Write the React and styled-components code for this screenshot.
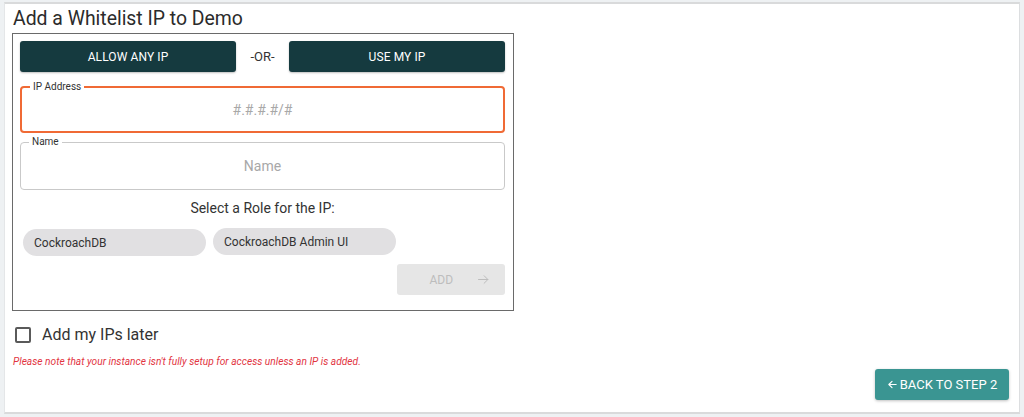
import React, { useState } from "react";
import styled, { createGlobalStyle } from "styled-components";

const GlobalStyle = createGlobalStyle`
  html, body {
    margin: 0;
    padding: 0;
    background: #eef1f3;
    font-family: Roboto, "Liberation Sans", Arial, sans-serif;
    color: #333;
  }
  * { box-sizing: border-box; }
`;

const ArrowRight = ({ size = 14, color = "currentColor" }) => (
  <svg width={size} height={size} viewBox="0 0 24 24" fill="none">
    <path d="M4 12h15M13 6l6 6-6 6" stroke={color} strokeWidth="1.6" strokeLinecap="round" strokeLinejoin="round" />
  </svg>
);

const ArrowLeft = ({ size = 12, color = "currentColor" }) => (
  <svg width={size} height={size} viewBox="0 0 24 24" fill="none">
    <path d="M20 12H5M11 5l-7 7 7 7" stroke={color} strokeWidth="2.4" strokeLinecap="round" strokeLinejoin="round" />
  </svg>
);

const App = () => {
  const [ip, setIp] = useState("");
  const [name, setName] = useState("");
  const [later, setLater] = useState(false);
  const roles = ["CockroachDB", "CockroachDB Admin UI"];

  return (
    <>
      <GlobalStyle />
      <Page>
        <Panel>
          <Title>Add a Whitelist IP to Demo</Title>
          <FormBox>
            <ChoiceRow>
              <DarkButton>ALLOW ANY IP</DarkButton>
              <OrText>-OR-</OrText>
              <DarkButton>USE MY IP</DarkButton>
            </ChoiceRow>

            <Field $focused>
              <FieldLabel>IP Address</FieldLabel>
              <FieldInput
                placeholder="#.#.#.#/#"
                value={ip}
                onChange={(e) => setIp(e.target.value)}
              />
            </Field>

            <Field>
              <FieldLabel>Name</FieldLabel>
              <FieldInput
                placeholder="Name"
                value={name}
                onChange={(e) => setName(e.target.value)}
              />
            </Field>

            <RoleLabel>Select a Role for the IP:</RoleLabel>
            <ChipRow>
              {roles.map((r, i) => (
                <Chip key={r} $raised={i === 1}>{r}</Chip>
              ))}
            </ChipRow>

            <AddRow>
              <AddButton disabled>
                <span>ADD</span>
                <ArrowRight size={15} color="#bdbdbd" />
              </AddButton>
            </AddRow>
          </FormBox>

          <CheckRow onClick={() => setLater(!later)}>
            <CheckBox $checked={later} />
            <CheckText>Add my IPs later</CheckText>
          </CheckRow>
          <Note>
            Please note that your instance isn't fully setup for access unless an IP is added.
          </Note>

          <FooterRow>
            <BackButton>
              <ArrowLeft size={11} color="#fff" />
              BACK TO STEP 2
            </BackButton>
          </FooterRow>
        </Panel>
      </Page>
    </>
  );
};

export default App;

// Styled Components

const Page = styled.div`
  width: 1024px;
  height: 417px;
  padding: 2px 4px 3px 4px;
  background: #eef1f3;
`;

const Panel = styled.div`
  background: #ffffff;
  height: 412px;
  border-top: 2px solid #d9dadb;
  border-bottom: 2px solid #d9dadb;
  border-left: 1px solid #e4e6e8;
  border-right: 1px solid #dcdee0;
  padding: 3px 0 0 7px;
  display: flex;
  flex-direction: column;
`;

const Title = styled.h1`
  margin: 0 0 3px 1px;
  font-size: 19.4px;
  line-height: 23px;
  font-weight: 400;
  color: #2b2b2b;
`;

const FormBox = styled.div`
  width: 502px;
  border: 1px solid #6a6a6a;
  padding: 7px 8px 15px 7px;
  display: flex;
  flex-direction: column;
`;

const ChoiceRow = styled.div`
  display: flex;
  align-items: center;
  height: 31px;
`;

const DarkButton = styled.button`
  width: 216px;
  height: 31px;
  border: none;
  border-radius: 3px;
  background: #153a3f;
  color: #ffffff;
  font-family: Roboto, "Liberation Sans", Arial, sans-serif;
  font-size: 12px;
  letter-spacing: 0.1px;
  box-shadow: 0 1px 2px rgba(0, 0, 0, 0.25);
  cursor: pointer;
`;

const OrText = styled.span`
  flex: 1;
  text-align: center;
  font-size: 13px;
  color: #333;
`;

const Field = styled.div`
  position: relative;
  height: ${(p) => (p.$focused ? "47px" : "48px")};
  margin-top: ${(p) => (p.$focused ? "14px" : "9px")};
  border: ${(p) => (p.$focused ? "2px solid #f06a35" : "1px solid #c9c9c9")};
  border-radius: 4px;
  display: flex;
`;

const FieldLabel = styled.span`
  position: absolute;
  top: -7px;
  left: 8px;
  padding: 0 3px;
  background: #ffffff;
  font-size: 10px;
  line-height: 12px;
  color: #333;
`;

const FieldInput = styled.input`
  flex: 1;
  border: none;
  outline: none;
  background: transparent;
  text-align: center;
  font-family: Roboto, "Liberation Sans", Arial, sans-serif;
  font-size: 14px;
  color: #333;

  &::placeholder {
    color: #a8a8a8;
  }
`;

const RoleLabel = styled.div`
  margin-top: 10px;
  text-align: center;
  font-size: 14px;
  line-height: 16px;
  color: #333;
`;

const ChipRow = styled.div`
  display: flex;
  gap: 7px;
  margin-top: 13px;
  padding-left: 3px;
  align-items: flex-start;
`;

const Chip = styled.div`
  width: 183px;
  height: 27px;
  margin-top: ${(p) => (p.$raised ? "-1px" : "0")};
  border-radius: 14px;
  background: #e1e0e2;
  padding-left: 11px;
  display: flex;
  align-items: center;
  font-size: 12px;
  color: #333;
`;

const AddRow = styled.div`
  display: flex;
  justify-content: flex-end;
  margin-top: 8px;
`;

const AddButton = styled.button`
  width: 108px;
  height: 31px;
  border: none;
  border-radius: 3px;
  background: #e6e6e6;
  color: #bdbdbd;
  font-family: Roboto, "Liberation Sans", Arial, sans-serif;
  font-size: 12px;
  display: flex;
  align-items: center;
  justify-content: flex-end;
  gap: 23px;
  padding: 0 14px 0 0;
`;

const CheckRow = styled.label`
  display: flex;
  align-items: center;
  gap: 11px;
  margin: 15px 0 0 3px;
  cursor: pointer;
`;

const CheckBox = styled.span`
  width: 16px;
  height: 16px;
  border: 2px solid #5a5a5a;
  border-radius: 2px;
  background: ${(p) => (p.$checked ? "#153a3f" : "transparent")};
`;

const CheckText = styled.span`
  font-size: 16px;
  line-height: 18px;
  color: #333;
`;

const Note = styled.div`
  margin: 12px 0 0 1px;
  font-size: 10.2px;
  font-style: italic;
  color: #e2353f;
`;

const FooterRow = styled.div`
  display: flex;
  justify-content: flex-end;
  padding: 0 10px 12px 0;
  margin-top: auto;
`;

const BackButton = styled.button`
  width: 134px;
  height: 31px;
  border: none;
  border-radius: 3px;
  background: #3a9592;
  color: #ffffff;
  font-family: Roboto, "Liberation Sans", Arial, sans-serif;
  font-size: 13px;
  display: flex;
  align-items: center;
  justify-content: center;
  gap: 2px;
  box-shadow: 0 1px 3px rgba(0, 0, 0, 0.25);
  cursor: pointer;
`;
